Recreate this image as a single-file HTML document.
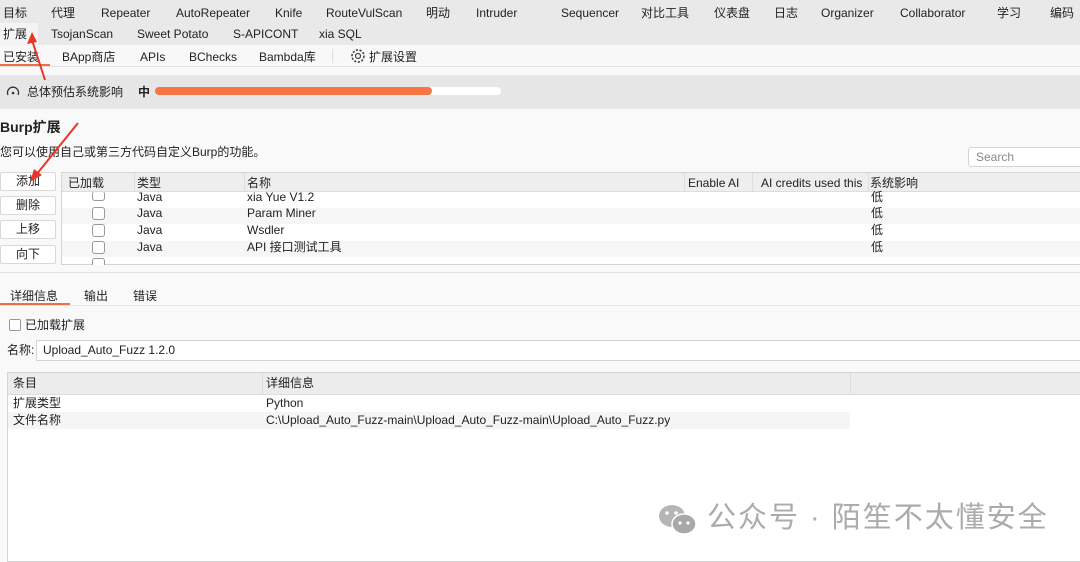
<!DOCTYPE html><html><head><meta charset="utf-8"><style>
*{margin:0;padding:0;box-sizing:border-box}
body{width:1080px;height:562px;overflow:hidden;background:#f9f9f9;font-family:"Liberation Sans","Noto Sans CJK SC",sans-serif;font-size:12px;color:#222;position:relative}
.a{position:absolute;white-space:nowrap;line-height:15px}
.btn{position:absolute;left:0;width:56px;height:19px;background:#fff;border:1px solid #d8d8d8;border-radius:2px;text-align:center;line-height:17px;font-size:12px}
.cb{position:absolute;left:92px;width:13px;height:13px;border:1px solid #999;border-radius:3px;background:#fff}
</style></head><body>
<div class="a" style="left:0;top:0;width:1080px;height:45px;background:#e9e9e9"></div>
<div class="a" style="left:0;top:23px;width:38px;height:22px;background:#f4f4f4"></div>
<div class="a" style="top:6px;left:3px">目标</div>
<div class="a" style="top:6px;left:51px">代理</div>
<div class="a" style="top:6px;left:101px">Repeater</div>
<div class="a" style="top:6px;left:176px">AutoRepeater</div>
<div class="a" style="top:6px;left:275px">Knife</div>
<div class="a" style="top:6px;left:326px">RouteVulScan</div>
<div class="a" style="top:6px;left:426px">明动</div>
<div class="a" style="top:6px;left:476px">Intruder</div>
<div class="a" style="top:6px;left:561px">Sequencer</div>
<div class="a" style="top:6px;left:641px">对比工具</div>
<div class="a" style="top:6px;left:714px">仪表盘</div>
<div class="a" style="top:6px;left:774px">日志</div>
<div class="a" style="top:6px;left:821px">Organizer</div>
<div class="a" style="top:6px;left:900px">Collaborator</div>
<div class="a" style="top:6px;left:997px">学习</div>
<div class="a" style="top:6px;left:1050px">编码</div>
<div class="a" style="top:27px;left:3px">扩展</div>
<div class="a" style="top:27px;left:51px">TsojanScan</div>
<div class="a" style="top:27px;left:137px">Sweet Potato</div>
<div class="a" style="top:27px;left:233px">S-APICONT</div>
<div class="a" style="top:27px;left:319px">xia SQL</div>
<div class="a" style="left:0;top:45px;width:1080px;height:22px;background:#f8f8f8;border-bottom:1px solid #e2e2e2"></div>
<div class="a" style="top:50px;left:3px">已安装</div>
<div class="a" style="left:0;top:64px;width:50px;height:2px;background:#f07046"></div>
<div class="a" style="top:50px;left:62px">BApp商店</div>
<div class="a" style="top:50px;left:140px">APIs</div>
<div class="a" style="top:50px;left:189px">BChecks</div>
<div class="a" style="top:50px;left:259px">Bambda库</div>
<div class="a" style="left:332px;top:49px;width:1px;height:14px;background:#ddd"></div>
<svg class="a" style="left:350px;top:48px" width="16" height="16" viewBox="0 0 16 16"><circle cx="8" cy="8" r="2.5" fill="none" stroke="#444" stroke-width="1.2"/><circle cx="8" cy="8" r="6" fill="none" stroke="#444" stroke-width="1.6" stroke-dasharray="2.2 1.5"/></svg>
<div class="a" style="top:50px;left:369px">扩展设置</div>
<div class="a" style="left:0;top:75px;width:1080px;height:34px;background:#e6e6e6"></div>
<svg class="a" style="left:6px;top:85px" width="14" height="12" viewBox="0 0 14 12"><path d="M2 10A5.5 5.5 0 1 1 12 10" fill="none" stroke="#333" stroke-width="1.3"/><circle cx="7" cy="8" r="1.3" fill="#333"/></svg>
<div class="a" style="top:85px;left:27px">总体预估系统影响</div>
<div class="a" style="top:85px;left:138px;font-weight:bold">中</div>
<div class="a" style="left:155px;top:87px;width:346px;height:8px;background:#fff;border-radius:4px"></div>
<div class="a" style="left:155px;top:87px;width:277px;height:8px;background:#f57545;border-radius:4px"></div>
<div class="a" style="top:118px;left:0;font-size:14px;font-weight:bold;line-height:18px">Burp扩展</div>
<div class="a" style="top:145px;left:0">您可以使用自己或第三方代码自定义Burp的功能。</div>
<div class="a" style="left:968px;top:147px;width:120px;height:20px;background:#fff;border:1px solid #d4d4d4;border-radius:3px;color:#888;padding-left:7px;line-height:18px">Search</div>
<div class="btn" style="top:172px">添加</div>
<div class="btn" style="top:196px">删除</div>
<div class="btn" style="top:220px">上移</div>
<div class="btn" style="top:245px">向下</div>
<div class="a" style="left:61px;top:172px;width:1030px;height:93px;background:#fff;border:1px solid #d4d4d4;overflow:hidden">
<div class="a" style="left:0;top:0;width:1030px;height:19px;background:#eeeeee;border-bottom:1px solid #ddd"></div>
<div class="a" style="left:72px;top:0;width:1px;height:19px;background:#ddd"></div>
<div class="a" style="left:182px;top:0;width:1px;height:19px;background:#ddd"></div>
<div class="a" style="left:622px;top:0;width:1px;height:19px;background:#ddd"></div>
<div class="a" style="left:690px;top:0;width:1px;height:19px;background:#ddd"></div>
<div class="a" style="left:806px;top:0;width:1px;height:19px;background:#ddd"></div>
<div class="a" style="top:3px;left:6px">已加载</div><div class="a" style="top:3px;left:75px">类型</div><div class="a" style="top:3px;left:185px">名称</div><div class="a" style="top:3px;left:626px">Enable AI</div><div class="a" style="top:3px;left:699px">AI credits used this</div><div class="a" style="top:3px;left:808px">系统影响</div>
<div class="a" style="left:0;top:35px;width:1030px;height:16px;background:#f6f6f6"></div>
<div class="a" style="left:0;top:68px;width:1030px;height:16px;background:#f6f6f6"></div>
</div>
<div class="cb" style="top:191px;height:10px;border-top:none"></div>
<div class="cb" style="top:207px"></div><div class="cb" style="top:224px"></div><div class="cb" style="top:241px"></div><div class="cb" style="top:258px"></div>
<div class="a" style="left:62px;top:191px;width:1018px;height:1px;background:#ddd"></div>
<div class="a" style="top:190px;left:137px">Java</div><div class="a" style="top:190px;left:247px">xia Yue V1.2</div><div class="a" style="top:190px;left:871px">低</div>
<div class="a" style="top:206px;left:137px">Java</div><div class="a" style="top:206px;left:247px">Param Miner</div><div class="a" style="top:206px;left:871px">低</div>
<div class="a" style="top:223px;left:137px">Java</div><div class="a" style="top:223px;left:247px">Wsdler</div><div class="a" style="top:223px;left:871px">低</div>
<div class="a" style="top:240px;left:137px">Java</div><div class="a" style="top:240px;left:247px">API 接口测试工具</div><div class="a" style="top:240px;left:871px">低</div>
<div class="a" style="left:0;top:265px;width:1080px;height:8px;background:#f9f9f9;border-bottom:1px solid #e0e0e0"></div>
<div class="a" style="top:289px;left:10px">详细信息</div><div class="a" style="top:289px;left:84px">输出</div><div class="a" style="top:289px;left:133px">错误</div>
<div class="a" style="left:0;top:303px;width:70px;height:2px;background:#f07046"></div>
<div class="a" style="left:0;top:305px;width:1080px;height:1px;background:#e6e6e6"></div>
<div class="a" style="left:9px;top:319px;width:12px;height:12px;border:1px solid #999;border-radius:2px;background:#fff"></div>
<div class="a" style="top:318px;left:25px">已加载扩展</div>
<div class="a" style="top:343px;left:7px">名称:</div>
<div class="a" style="left:36px;top:340px;width:1050px;height:21px;background:#fff;border:1px solid #d4d4d4;padding-left:6px;line-height:19px">Upload_Auto_Fuzz 1.2.0</div>
<div class="a" style="left:7px;top:372px;width:1080px;height:190px;background:#fff;border:1px solid #d4d4d4"></div>
<div class="a" style="left:8px;top:373px;width:1080px;height:22px;background:#ececec;border-bottom:1px solid #ddd"></div>
<div class="a" style="left:262px;top:373px;width:1px;height:22px;background:#ddd"></div>
<div class="a" style="left:850px;top:373px;width:1px;height:22px;background:#ddd"></div>
<div class="a" style="top:376px;left:13px">条目</div><div class="a" style="top:376px;left:266px">详细信息</div>
<div class="a" style="left:8px;top:412px;width:842px;height:17px;background:#f5f5f5"></div>
<div class="a" style="top:396px;left:13px">扩展类型</div><div class="a" style="top:396px;left:266px">Python</div>
<div class="a" style="top:413px;left:13px">文件名称</div><div class="a" style="top:413px;left:266px">C:\Upload_Auto_Fuzz-main\Upload_Auto_Fuzz-main\Upload_Auto_Fuzz.py</div>
<svg class="a" style="left:657px;top:503px" width="42" height="34" viewBox="0 0 42 34"><ellipse cx="15" cy="13" rx="13" ry="11" fill="#b5b5b5"/><ellipse cx="27" cy="21" rx="12" ry="10" fill="#a8a8a8" stroke="#fff" stroke-width="1.5"/><circle cx="10" cy="10" r="1.8" fill="#fff"/><circle cx="19" cy="10" r="1.8" fill="#fff"/><circle cx="23" cy="20" r="1.6" fill="#fff"/><circle cx="31" cy="20" r="1.6" fill="#fff"/></svg>
<div class="a" style="left:707px;top:501px;font-size:29px;color:#ababab;letter-spacing:2px;line-height:34px">公众号 · 陌笙不太懂安全</div>
<svg class="a" style="left:0;top:0" width="120" height="200" viewBox="0 0 120 200"><path d="M45 80L32 40" stroke="#e8362b" stroke-width="2"/><path d="M32 32l-5 12 10-2z" fill="#e8362b"/><path d="M78 123L36 175" stroke="#e8362b" stroke-width="2"/><path d="M30 182l4-13 8 6z" fill="#e8362b"/></svg>
</body></html>
